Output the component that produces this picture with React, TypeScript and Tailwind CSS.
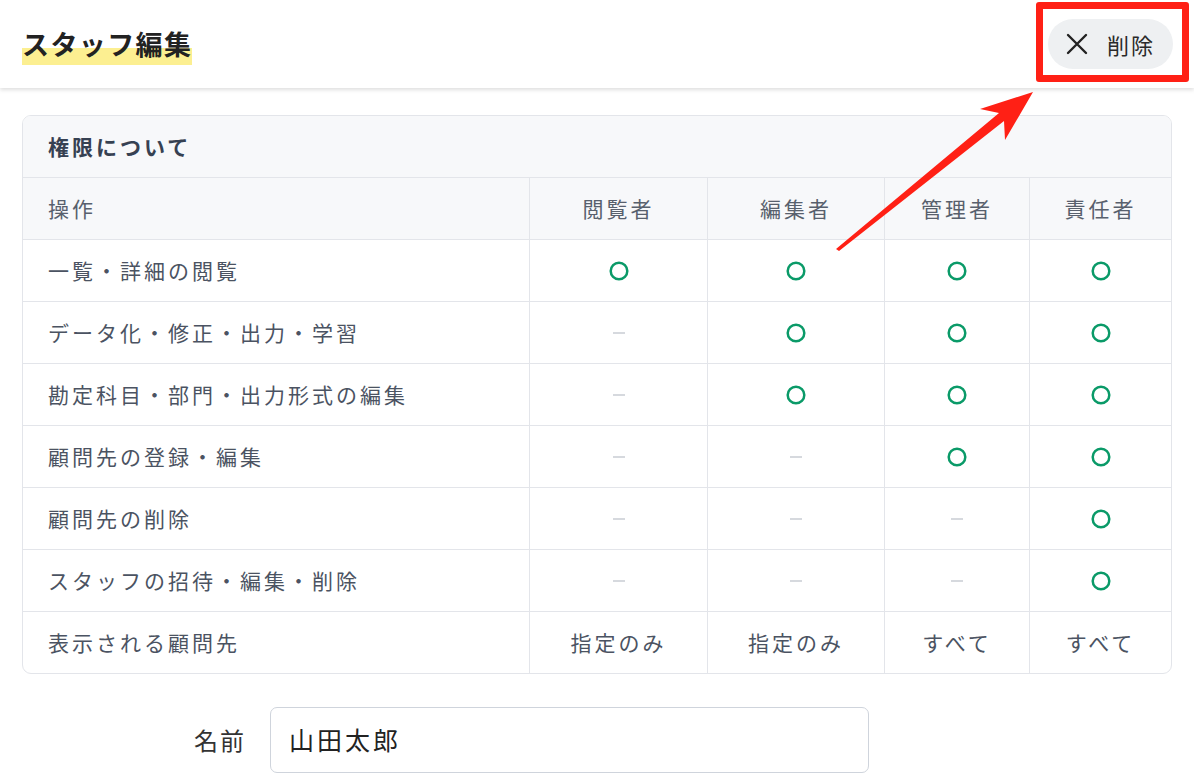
import React from "react";

type Mark = "o" | "-" | string;

const rows: { label: string; cells: Mark[] }[] = [
  { label: "一覧・詳細の閲覧", cells: ["o", "o", "o", "o"] },
  { label: "データ化・修正・出力・学習", cells: ["-", "o", "o", "o"] },
  { label: "勘定科目・部門・出力形式の編集", cells: ["-", "o", "o", "o"] },
  { label: "顧問先の登録・編集", cells: ["-", "-", "o", "o"] },
  { label: "顧問先の削除", cells: ["-", "-", "-", "o"] },
  { label: "スタッフの招待・編集・削除", cells: ["-", "-", "-", "o"] },
  { label: "表示される顧問先", cells: ["指定のみ", "指定のみ", "すべて", "すべて"] },
];

const font = { fontFamily: '"Noto Sans CJK JP", "Noto Sans", sans-serif' };

function Circle() {
  return (
    <svg width="22" height="22" viewBox="0 0 22 22">
      <circle cx="11" cy="11" r="8.3" fill="none" stroke="#0a9a68" strokeWidth="2.5" />
    </svg>
  );
}

function Dash() {
  return <div className="w-[12px] h-[2px] bg-[#d6d9de]" />;
}

function Cell({ v }: { v: Mark }) {
  return (
    <div className="flex items-center justify-center border-l border-[#e3e5ea]">
      {v === "o" ? <Circle /> : v === "-" ? <Dash /> : <span>{v}</span>}
    </div>
  );
}

export default function App() {
  return (
    <div
      className="relative w-[1194px] h-[780px] overflow-hidden bg-white text-[#4b5362]"
      style={font}
    >
      {/* header */}
      <div className="relative z-10 flex h-[88px] items-center justify-between bg-white pl-[22px] pr-[21px] shadow-[0_2px_4px_rgba(0,0,0,0.13)]">
        <h1 className="relative -mt-[2px] text-[27px] font-bold leading-none tracking-[1.4px] text-[#222]">
          <span className="absolute left-0 right-0 top-[18px] h-[17px] bg-[#fcef91]" />
          <span className="relative">スタッフ編集</span>
        </h1>
        <button className="flex h-[50px] w-[125px] items-center gap-[19px] rounded-full bg-[#eef0f2] pl-[18px] text-[22px] tracking-[2px] text-[#2a2a2a]">
          <svg width="22" height="22" viewBox="0 0 22 22">
            <path d="M2 2 L20 20 M20 2 L2 20" stroke="#222" strokeWidth="2.4" strokeLinecap="round" />
          </svg>
          <span>削除</span>
        </button>
      </div>

      {/* content */}
      <div className="px-[22px] pt-[27px]">
        <div className="overflow-hidden rounded-[9px] border border-[#e3e5ea] text-[21px] tracking-[3px]">
          <div className="flex h-[62px] items-center border-b border-[#e3e5ea] bg-[#f7f8fa] pl-[25px] font-bold text-[#364152]">
            権限について
          </div>
          <div className="grid h-[62px] grid-cols-[506px_178px_177px_145px_1fr] border-b border-[#e3e5ea] bg-[#f7f8fa] text-[#58606d]">
            <div className="flex items-center pl-[25px]">操作</div>
            <Cell v="閲覧者" />
            <Cell v="編集者" />
            <Cell v="管理者" />
            <Cell v="責任者" />
          </div>
          {rows.map((r, i) => (
            <div
              key={r.label}
              className={
                i === rows.length - 1
                  ? "grid h-[61px] grid-cols-[506px_178px_177px_145px_1fr]"
                  : "grid h-[62px] grid-cols-[506px_178px_177px_145px_1fr] border-b border-[#e3e5ea]"
              }
            >
              <div className="flex items-center pl-[25px]">{r.label}</div>
              {r.cells.map((c, j) => (
                <Cell key={j} v={c} />
              ))}
            </div>
          ))}
        </div>

        <div className="mt-[33px] flex items-center">
          <label className="w-[224px] text-right text-[24px] tracking-[2px] text-[#333]">名前</label>
          <div className="ml-[24px] flex h-[66px] w-[599px] items-center rounded-[7px] border border-[#cfd4dc] pl-[18px] text-[25px] tracking-[3px] text-[#222]">
            山田太郎
          </div>
        </div>
      </div>

      {/* annotation: red box */}
      <div className="pointer-events-none absolute left-[1036px] top-[2px] z-20 h-[80px] w-[153px] rounded-[3px] border-[7px] border-[#ff2015]" />

      {/* annotation: arrow */}
      <svg className="pointer-events-none absolute left-0 top-0 z-20" width="1194" height="780">
        <polygon
          points="836,249 999,113 980,109 1033,92 1005,140 1004,121 839,251"
          fill="#ff2015"
        />
      </svg>
    </div>
  );
}
